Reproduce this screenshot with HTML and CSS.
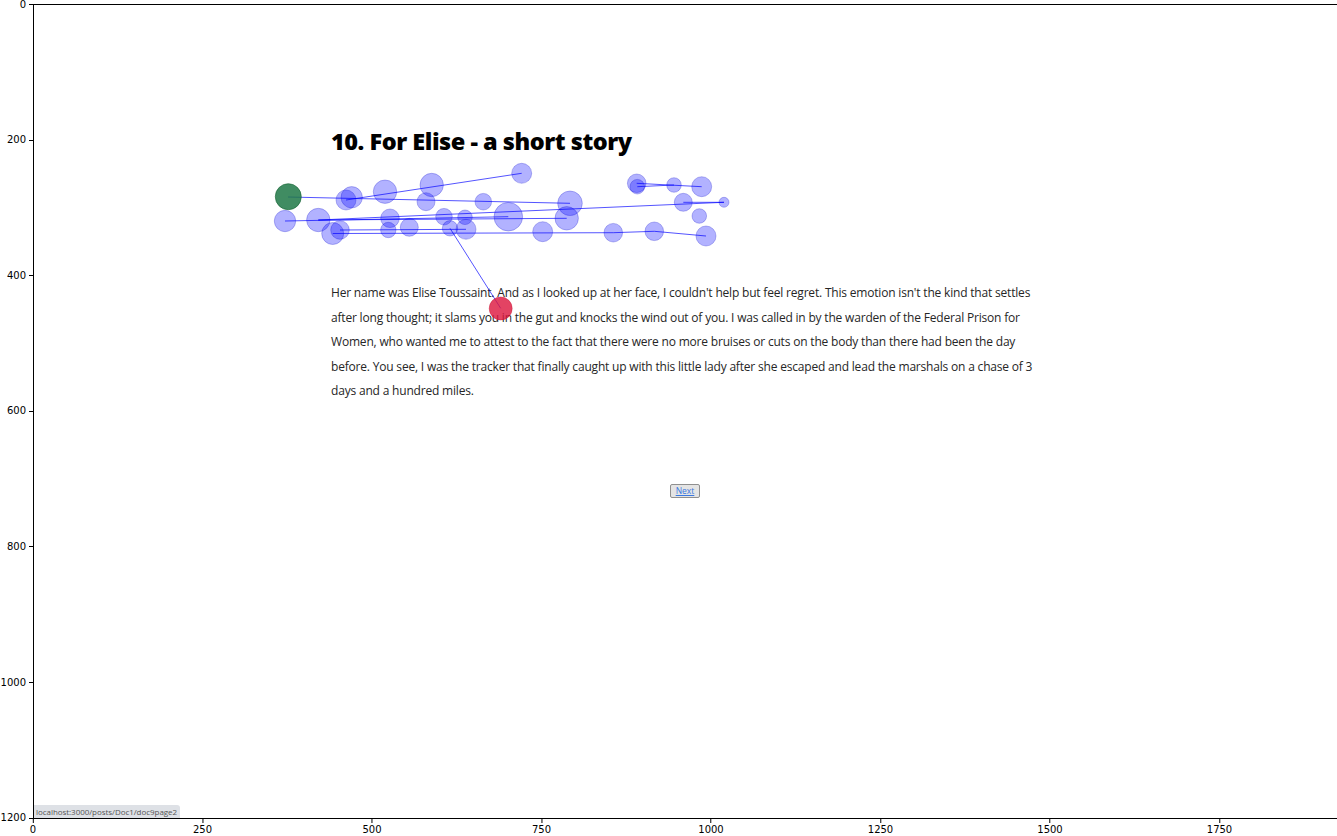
FILE: index.html
```html
<!DOCTYPE html>
<html>
<head>
<meta charset="utf-8">
<link rel="stylesheet" href="styles.css">
</head>
<body>
<div class="figure">
  <div class="plot-row">
    <div class="yaxis">
      <div class="ytick" style="top:0px"><span class="lbl">0</span><span class="tk"></span></div>
      <div class="ytick" style="top:135.6px"><span class="lbl">200</span><span class="tk"></span></div>
      <div class="ytick" style="top:271.2px"><span class="lbl">400</span><span class="tk"></span></div>
      <div class="ytick" style="top:406.8px"><span class="lbl">600</span><span class="tk"></span></div>
      <div class="ytick" style="top:542.4px"><span class="lbl">800</span><span class="tk"></span></div>
      <div class="ytick" style="top:678px"><span class="lbl">1000</span><span class="tk"></span></div>
      <div class="ytick" style="top:813.6px"><span class="lbl">1200</span><span class="tk"></span></div>
    </div>
    <div class="axes">
      <div class="page">
        <div class="column">
          <h1 class="title">10. For Elise - a short story</h1>
          <p class="story">Her name was Elise Toussaint. And as I looked up at her face, I couldn't help but feel regret. This emotion isn't the kind that settles<br>after long thought; it slams you in the gut and knocks the wind out of you. I was called in by the warden of the Federal Prison for<br>Women, who wanted me to attest to the fact that there were no more bruises or cuts on the body than there had been the day<br>before. You see, I was the tracker that finally caught up with this little lady after she escaped and lead the marshals on a chase of 3<br>days and a hundred miles.</p>
          <div class="nav"><button class="next-btn"><a class="next-link" href="#">Next</a></button></div>
        </div>
        <div class="status">localhost:3000/posts/Doc1/doc9page2</div>
      </div>
      <svg class="overlay" width="1304" height="814" viewBox="33 4 1304 814" xmlns="http://www.w3.org/2000/svg">
        <g class="fix">
          <circle cx="521.7" cy="173.3" r="10"/>
          <circle cx="285" cy="221" r="10.7"/>
          <circle cx="318.3" cy="220" r="11.7"/>
          <circle cx="332.7" cy="233.5" r="11"/>
          <circle cx="340" cy="230" r="9.3"/>
          <circle cx="346" cy="200" r="10"/>
          <circle cx="351.7" cy="197.3" r="10.7"/>
          <circle cx="385" cy="191.7" r="11.7"/>
          <circle cx="431.7" cy="185" r="11.7"/>
          <circle cx="426" cy="201.7" r="9"/>
          <circle cx="390" cy="218.3" r="9.3"/>
          <circle cx="388.3" cy="230" r="7.7"/>
          <circle cx="409.3" cy="227.3" r="9"/>
          <circle cx="444" cy="216.7" r="8.3"/>
          <circle cx="450" cy="228.3" r="7.7"/>
          <circle cx="465" cy="217.3" r="7.3"/>
          <circle cx="466" cy="229.3" r="10"/>
          <circle cx="483.3" cy="201.7" r="8.3"/>
          <circle cx="508.3" cy="216.7" r="14.3"/>
          <circle cx="542.7" cy="231.7" r="10"/>
          <circle cx="570" cy="203.3" r="12.3"/>
          <circle cx="566.7" cy="218.3" r="11.7"/>
          <circle cx="613.3" cy="232.7" r="9.3"/>
          <circle cx="654.3" cy="231.3" r="9.3"/>
          <circle cx="636.7" cy="183.3" r="9.3"/>
          <circle cx="637.3" cy="186.7" r="7.3"/>
          <circle cx="674" cy="185" r="7.3"/>
          <circle cx="701.7" cy="186.7" r="10"/>
          <circle cx="683.3" cy="202.3" r="9"/>
          <circle cx="724" cy="202.3" r="5"/>
          <circle cx="699.3" cy="216" r="7.3"/>
          <circle cx="706" cy="236" r="10"/>
        </g>
        <g class="path">
          <line x1="288" y1="197" x2="570" y2="203.3"/>
          <line x1="346" y1="200" x2="521.7" y2="173.3"/>
          <line x1="285" y1="221" x2="508.3" y2="216.7"/>
          <line x1="318.3" y1="220" x2="566.7" y2="218.3"/>
          <line x1="318.3" y1="220" x2="724" y2="202.3"/>
          <line x1="724" y1="202.3" x2="683.3" y2="202.3"/>
          <line x1="636.7" y1="183.3" x2="701.7" y2="186.7"/>
          <line x1="637.3" y1="186.7" x2="674" y2="185"/>
          <line x1="340" y1="230" x2="466" y2="229.3"/>
          <line x1="332.7" y1="233.5" x2="613.3" y2="232.7"/>
          <line x1="613.3" y1="232.7" x2="654.3" y2="231.3"/>
          <line x1="654.3" y1="231.3" x2="706" y2="236"/>
          <line x1="450" y1="228.3" x2="500.7" y2="308.3"/>
        </g>
        <circle class="start" cx="288.3" cy="196.7" r="13"/>
        <circle class="end" cx="500.7" cy="308.5" r="11.5"/>
      </svg>
    </div>
  </div>
  <div class="xaxis">
    <div class="xtick" style="left:0px"><span class="tk"></span><span class="lbl">0</span></div>
    <div class="xtick" style="left:169.5px"><span class="tk"></span><span class="lbl">250</span></div>
    <div class="xtick" style="left:339px"><span class="tk"></span><span class="lbl">500</span></div>
    <div class="xtick" style="left:508.5px"><span class="tk"></span><span class="lbl">750</span></div>
    <div class="xtick" style="left:678px"><span class="tk"></span><span class="lbl">1000</span></div>
    <div class="xtick" style="left:847.5px"><span class="tk"></span><span class="lbl">1250</span></div>
    <div class="xtick" style="left:1017px"><span class="tk"></span><span class="lbl">1500</span></div>
    <div class="xtick" style="left:1186.5px"><span class="tk"></span><span class="lbl">1750</span></div>
  </div>
</div>
</body>
</html>
```

FILE: styles.css
```css
html, body {
  margin: 0;
  padding: 0;
  background: #ffffff;
  overflow: hidden;
}

body {
  width: 1337px;
  height: 836px;
  font-family: "DejaVu Sans", sans-serif;
  font-size: 10px;
  color: #000;
}

.figure {
  padding-top: 4px;
  display: flex;
  flex-direction: column;
}

.plot-row {
  display: flex;
}

.yaxis {
  position: relative;
  width: 33px;
  flex: none;
}

.ytick {
  position: absolute;
  right: 0;
  display: flex;
  align-items: center;
  gap: 3px;
  transform: translateY(-50%);
  height: 12px;
  margin-top: 0.5px;
}

.ytick .lbl {
  line-height: 12px;
}

.ytick .tk {
  width: 4px;
  height: 1px;
  background: #000;
}

.axes {
  position: relative;
  width: 1303px;
  height: 813px;
  border-top: 1px solid #000;
  border-left: 1px solid #000;
  border-bottom: 1px solid #000;
  flex: none;
  overflow: hidden;
}

.page {
  height: 813px;
  display: flex;
  flex-direction: column;
  font-family: "Open Sans", "Noto Sans", sans-serif;
}

.column {
  margin-left: 297px;
  width: 720px;
  display: flex;
  flex-direction: column;
}

.title {
  margin: 121px 0 0 0;
  font-size: 23.5px;
  line-height: 30px;
  font-weight: 800;
  color: #000;
  letter-spacing: -0.48px;
}

.story {
  margin: 125px 0 0 0;
  font-size: 12px;
  line-height: 24.5px;
  color: #262626;
  white-space: nowrap;
  letter-spacing: -0.19px;
}

.nav {
  display: flex;
  margin-top: 80px;
  padding-left: 339px;
}

.next-btn {
  width: 30px;
  height: 14px;
  padding: 0;
  margin: 0;
  border: 1px solid #8f8f8f;
  border-radius: 2px;
  background: #e4e4e4;
  display: flex;
  align-items: center;
  justify-content: center;
  font: inherit;
}

.next-link {
  font-family: "Open Sans", sans-serif;
  font-size: 8.5px;
  line-height: 10px;
  color: #3a78e0;
  text-decoration: underline;
}

.status {
  margin-top: auto;
  align-self: flex-start;
  height: 13px;
  padding: 0 3px 0 2px;
  background: #dee1e6;
  border-top-right-radius: 3px;
  color: #555;
  font-family: "Open Sans", sans-serif;
  font-size: 8px;
  line-height: 13px;
  letter-spacing: -0.05px;
}

.overlay {
  position: absolute;
  left: -1px;
  top: -1px;
}

.fix circle {
  fill: rgba(0, 0, 255, 0.3);
  stroke: rgba(0, 0, 200, 0.25);
  stroke-width: 1;
}

.path line {
  stroke: rgba(0, 0, 255, 0.85);
  stroke-width: 0.8;
}

.start {
  fill: rgba(30, 120, 70, 0.85);
  stroke: rgba(20, 100, 50, 0.6);
  stroke-width: 1;
}

.end {
  fill: rgba(220, 20, 60, 0.8);
  stroke: rgba(200, 20, 50, 0.4);
  stroke-width: 1;
}

.xaxis {
  position: relative;
  height: 18px;
  margin-left: 33px;
}

.xtick {
  position: absolute;
  top: 0;
  display: flex;
  flex-direction: column;
  align-items: center;
  transform: translateX(-50%);
}

.xtick .tk {
  width: 1px;
  height: 4px;
  background: #000;
}

.xtick .lbl {
  margin-top: 1px;
  line-height: 12px;
}
```
